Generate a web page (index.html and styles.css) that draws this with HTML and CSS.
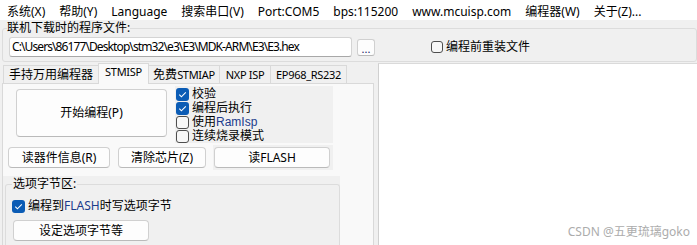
FILE: index.html
```html
<!DOCTYPE html>
<html lang="zh-CN">
<head>
<meta charset="utf-8">
<title>mcuisp</title>
<link rel="stylesheet" href="styles.css">
</head>
<body>
<div class="menubar">
  <span>系统(X)</span>
  <span>帮助(Y)</span>
  <span>Language</span>
  <span>搜索串口(V)</span>
  <span>Port:COM5</span>
  <span>bps:115200</span>
  <span>www.mcuisp.com</span>
  <span>编程器(W)</span>
  <span>关于(Z)...</span>
</div>

<fieldset class="filegroup">
  <legend>联机下载时的程序文件:</legend>
  <div class="filerow">
    <div class="pathbox">C:\Users\86177\Desktop\stm32\e3\E3\MDK-ARM\E3\E3.hex</div>
    <button class="btn dots">...</button>
    <label class="chk reload"><span class="ubox"></span>编程前重装文件</label>
  </div>
</fieldset>

<div class="main">
  <div class="tabctl">
    <div class="tabstrip">
      <div class="tab t1">手持万用编程器</div>
      <div class="tab t2 sel"><span class="lat">STMISP</span></div>
      <div class="tab t3">免费<span class="lat">STMIAP</span></div>
      <div class="tab t4"><span class="lat">NXP ISP</span></div>
      <div class="tab t5"><span class="lat">EP968_RS232</span></div>
    </div>
    <div class="panel">
      <div class="row1">
        <button class="btn big">开始编程(P)</button>
        <div class="checks">
          <div class="chk"><svg class="cbox" width="13" height="13" viewBox="0 0 13 13"><rect x="0" y="0" width="13" height="13" rx="3" fill="#0b5cb5"/><path d="M3.3 6.7 L5.4 8.8 L9.8 4.3" fill="none" stroke="#fff" stroke-width="1.1"/></svg>校验</div>
          <div class="chk"><svg class="cbox" width="13" height="13" viewBox="0 0 13 13"><rect x="0" y="0" width="13" height="13" rx="3" fill="#0b5cb5"/><path d="M3.3 6.7 L5.4 8.8 L9.8 4.3" fill="none" stroke="#fff" stroke-width="1.1"/></svg>编程后执行</div>
          <div class="chk"><span class="ubox"></span>使用<span class="blue">RamIsp</span></div>
          <div class="chk"><span class="ubox"></span>连续烧录模式</div>
        </div>
      </div>
      <div class="row2">
        <button class="btn w1">读器件信息(R)</button>
        <button class="btn w2">清除芯片(Z)</button>
        <div class="btnwrap"><button class="btn w3">读FLASH</button></div>
      </div>
      <div class="optarea">
        <fieldset class="optgroup">
          <legend>选项字节区:</legend>
          <div class="chk opt"><svg class="cbox" width="13" height="13" viewBox="0 0 13 13"><rect x="0" y="0" width="13" height="13" rx="3" fill="#0b5cb5"/><path d="M3.3 6.7 L5.4 8.8 L9.8 4.3" fill="none" stroke="#fff" stroke-width="1.1"/></svg>编程到<span class="blue">FLASH</span>时写选项字节</div>
          <button class="btn w4">设定选项字节等</button>
        </fieldset>
      </div>
    </div>
  </div>
  <div class="output">
    <span class="watermark">CSDN @五更琉璃goko</span>
  </div>
</div>
</body>
</html>
```

FILE: styles.css
```css
html, body {
  margin: 0;
  padding: 0;
}
body {
  width: 697px;
  height: 245px;
  overflow: hidden;
  background: #f0f0f0;
  font-family: "Noto Sans", "Noto Sans CJK SC", sans-serif;
  font-size: 12px;
  line-height: 16px;
  color: #000;
}

/* menu bar */
.menubar {
  display: flex;
  gap: 14px;
  height: 20px;
  box-sizing: border-box;
  padding: 4px 0 0 7px;
  background: #fff;
  white-space: nowrap;
}

/* file group */
.filegroup {
  margin: 0 0 0 2px;
  border: 1px solid #dcdcdc;
  border-radius: 3px;
  padding: 1px 4px 4px 4px;
  min-width: 0;
}
.filegroup legend {
  padding: 0;
  line-height: 16px;
}
.filerow {
  display: flex;
  align-items: center;
  height: 20px;
}
.pathbox {
  box-sizing: border-box;
  margin-left: 2px;
  width: 343px;
  height: 20px;
  padding-left: 2px;
  background: #fff;
  border: 1px solid #d4d4d4;
  border-bottom-color: #a8a8a8;
  border-radius: 3px;
  line-height: 18px;
  letter-spacing: -0.9px;
  white-space: nowrap;
  overflow: hidden;
}

.btn {
  box-sizing: border-box;
  margin: 0;
  padding: 0;
  border: 1px solid #d0d0d0;
  border-bottom-color: #bababa;
  border-radius: 4px;
  background: #fdfdfd;
  font: inherit;
  color: #000;
  line-height: 16px;
}
.dots {
  margin-left: 5px;
  width: 18px;
  height: 17px;
  line-height: 17px;
  font-size: 11px;
  color: #23236a;
  border-radius: 3px;
}

.chk {
  display: flex;
  align-items: center;
  height: 14px;
  line-height: 14px;
  white-space: nowrap;
}
.checks .chk {
  font-family: "Liberation Sans", "Noto Sans CJK SC", sans-serif;
  line-height: 13px;
}
.cbox {
  flex: none;
  margin-right: 3px;
}
.ubox {
  flex: none;
  box-sizing: border-box;
  width: 13px;
  height: 13px;
  margin-right: 3px;
  border: 1px solid #4e4e4e;
  border-radius: 3px;
  background: #f7f7f7;
}
.reload {
  margin-left: 56px;
}
.reload .ubox {
  width: 12px;
  height: 12px;
}
.blue {
  color: #1b3b8c;
}

/* main area */
.main {
  display: flex;
  margin-top: 1px;
  height: 182px;
}
.tabctl {
  margin-left: 2px;
  width: 372px;
  display: flex;
  flex-direction: column;
}
.tabstrip {
  display: flex;
  align-items: flex-end;
  height: 22px;
  padding-left: 1px;
}
.tab {
  box-sizing: border-box;
  height: 18px;
  margin-right: -1px;
  border: 1px solid #d9d9d9;
  border-bottom: none;
  background: #f0f0f0;
  line-height: 17px;
  text-align: center;
  white-space: nowrap;
  overflow: hidden;
}
.t1 { width: 96px; }
.t2 { width: 51px; }
.t3 { width: 72px; }
.t4 { width: 52px; }
.t5 { width: 77px; }
.lat {
  font-size: 11px;
  letter-spacing: -0.3px;
}
.tab.sel {
  position: relative;
  z-index: 1;
  height: 21px;
  margin-bottom: -1px;
  background: #f9f9f9;
  line-height: 15px;
}
.panel {
  flex: 1;
  border: 1px solid #d9d9d9;
  background: #f9f9f9;
  display: flex;
  flex-direction: column;
}

.row1 {
  display: flex;
  margin-top: 2px;
  height: 57px;
  padding-left: 13px;
}
.big {
  margin-top: 3px;
  width: 151px;
  height: 48px;
}
.checks {
  margin-left: 8px;
  width: 158px;
  box-sizing: border-box;
  padding: 1px 0 0 1px;
  background: #f0f0f0;
}

.row2 {
  display: flex;
  align-items: center;
  margin-top: 2px;
  height: 25px;
  padding-left: 5px;
}
.row2 .btn {
  height: 21px;
}
.w1 { width: 102px; }
.w2 { width: 88px; margin-left: 8px; }
.w3 { width: 116px; }
.btnwrap {
  margin-left: 7px;
  padding: 2px 3px 2px 1px;
  background: #f0f0f0;
}

.optarea {
  margin-top: 6px;
  width: 337px;
  flex: 1;
  background: #f0f0f0;
}
.optgroup {
  margin: 0 0 0 2px;
  border: 1px solid #dcdcdc;
  border-bottom: none;
  border-radius: 3px 3px 0 0;
  padding: 0 0 0 6px;
  height: 80px;
  box-sizing: border-box;
  min-width: 0;
}
.optgroup legend {
  padding: 0 1px;
  line-height: 16px;
}
.opt {
  margin-top: 7px;
}
.w4 {
  display: block;
  margin: 7px 0 0 1px;
  width: 136px;
  height: 21px;
}

.output {
  position: relative;
  flex: 1;
  margin-left: 4px;
  background: #fff;
  border-top: 1px solid #dadada;
  border-left: 1px solid #d0d0d0;
}
.watermark {
  position: absolute;
  right: 7px;
  bottom: 5px;
  color: #acacac;
  font-size: 12px;
  line-height: 16px;
  white-space: nowrap;
}
```
